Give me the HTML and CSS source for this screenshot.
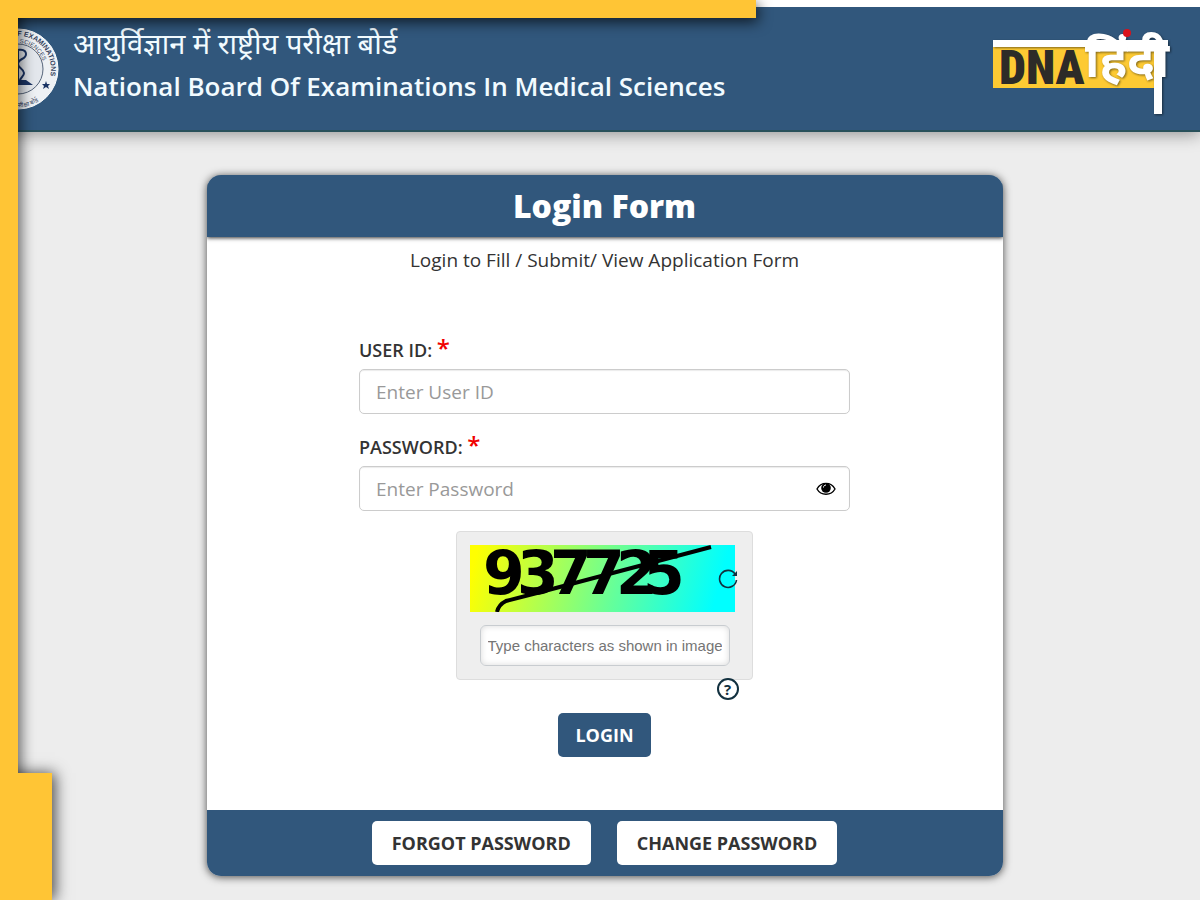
FILE: index.html
```html
<!DOCTYPE html>
<html lang="en">
<head>
  <meta charset="utf-8" />
  <meta name="viewport" content="width=device-width,initial-scale=1" />
  <title>Login Form</title>
  <link rel="stylesheet" href="styles.css">
</head>
<body>
  <div class="frame frame-top"></div>
  <div class="frame frame-left"></div>
  <div class="frame frame-foot"></div>

  <header class="site-header">
    <svg class="emblem" viewBox="0 0 82 82" role="img" aria-label="NBEMS emblem">
      <defs>
        <path id="ringOuter" d="M8 41a33 33 0 1 1 65 8" />
        <path id="ringInner" d="M15 41a26 26 0 0 1 52 0" />
        <path id="ringBottom" d="M3 41a38 38 0 0 0 76 0" />
      </defs>
      <circle cx="41" cy="41" r="40" fill="#eef1f4" stroke="#fff" stroke-width="1" />
      <circle cx="41" cy="41" r="25" fill="#e3e7ec" stroke="#56657a" stroke-width="1" />
      <text class="ring-text"><textPath href="#ringOuter" startOffset="99%" text-anchor="end">OF EXAMINATIONS</textPath></text>
      <text class="ring-text ring-small"><textPath href="#ringInner" startOffset="90%" text-anchor="end">SCIENCES</textPath></text>
      <text class="ring-text ring-small"><textPath href="#ringBottom" startOffset="49%">परीक्षा बोर्ड</textPath></text>
      <path d="M69 53l1 3 3 0-2 2 1 3-3-2-3 2 1-3-2-2 3 0z" fill="#1b3464" />
      <path d="M37 25c2-5 12-4 12 1 0 6-8 4-8 10 0 4 6 5 6 9s-4 4-4 8M41 22v32" fill="none" stroke="#1b3464" stroke-width="2" />
      <path d="M33 52h16l7 5H28z" fill="#1b3464" />
    </svg>
    <div class="org">
      <div class="org-hi" lang="hi">आयुर्विज्ञान में राष्ट्रीय परीक्षा बोर्ड</div>
      <div class="org-en">National Board Of Examinations In Medical Sciences</div>
    </div>
    <svg class="dna-logo" viewBox="0 0 176 94" role="img" aria-label="DNA हिंदी">
      <rect x="0" y="19" width="162" height="48" fill="#fdca33" />
      <text class="dna" x="6" y="63">DNA</text>
      <g class="dna-white">
        <rect x="0" y="19" width="175" height="7" />
        <rect x="161" y="23" width="8" height="70" />
        <text class="dna-hindi" x="92" y="56">हिंदी</text>
      </g>
      <circle cx="134" cy="12" r="4" fill="#d8121b" />
    </svg>
  </header>

  <main class="page">
    <form class="card">
      <h1 class="card-title">Login Form</h1>
      <div class="card-body">
        <p class="lead">Login to Fill / Submit/ View Application Form</p>

        <div class="fields">
          <div class="field">
            <label for="userId">USER ID: <span class="req">*</span></label>
            <input id="userId" type="text" placeholder="Enter User ID">
          </div>
          <div class="field">
            <label for="password">PASSWORD: <span class="req">*</span></label>
            <div class="password-box">
              <input id="password" type="password" placeholder="Enter Password">
              <button class="eye" type="button" aria-label="Show password">
                <svg width="20" height="14" viewBox="0 0 20 14">
                  <path d="M1 7c4-7.500 14-7.500 18 0-4 7-14 7-18 0z" fill="#fff" stroke="#000" stroke-width="1.400" />
                  <circle cx="10" cy="6" r="4.800" />
                  <path d="M7.500 5.500c0-1.500 1-2.500 2.500-2.500" fill="none" stroke="#fff" stroke-width="1" />
                </svg>
              </button>
            </div>
          </div>
        </div>

        <div class="captcha">
          <div class="captcha-image">
            <svg width="265" height="67" viewBox="0 0 265 67" role="img" aria-label="937725">
              <text class="digits" y="49" x="13 47 80 113 146 173">937725</text>
              <path class="scratch" d="M27 67c1-5 3-8 9-11l31-8 174-46" />
            </svg>
            <button class="refresh" type="button" aria-label="Refresh captcha">
              <svg width="20" height="20" viewBox="0 0 20 20">
                <path d="M17 5A8.500 8.500 0 1 0 18.500 11" fill="none" stroke="#12303f" stroke-width="1.600" />
                <path d="M19 2v5h-5z" fill="#12303f" />
              </svg>
            </button>
          </div>
          <input class="captcha-input" type="text" aria-label="Captcha" placeholder="Type characters as shown in image">
        </div>
        <div class="help-row">
          <button class="help" type="button" aria-label="Captcha help">?</button>
        </div>

        <button class="btn btn-login" type="submit">LOGIN</button>
      </div>
      <div class="card-footer">
        <button class="btn btn-light" type="button">FORGOT PASSWORD</button>
        <button class="btn btn-light" type="button">CHANGE PASSWORD</button>
      </div>
    </form>
  </main>
</body>
</html>
```
FILE: styles.css
```css
* { box-sizing: border-box; }
body {
  margin: 0;
  padding-top: 7px;
  position: relative;
  min-height: 100vh;
  overflow-x: hidden;
  background: #ededed;
  color: #333;
  font-family: "Open Sans", "Noto Sans", sans-serif;
  font-size: 18px;
}
button { font-family: inherit; cursor: pointer; }

/* yellow frame over the page */
.frame {
  position: absolute;
  background: #ffc535;
}
.frame-top {
  top: 0; left: 0; z-index: 2;
  width: 63%; height: 18px;
  box-shadow: 2px 4px 14px rgba(0,0,0,0.7);
}
.frame-left {
  top: 0; left: 0; bottom: 0; z-index: 3;
  width: 18px;
  box-shadow: 3px 0 14px rgba(0,0,0,0.6);
  clip-path: inset(18px -30px 0 0);
}
.frame-foot {
  left: 0; bottom: 0; z-index: 4;
  width: 52px; height: 127px;
  box-shadow: 3px 0 14px rgba(0,0,0,0.7);
}
.frame-foot::before {
  content: "";
  position: absolute; left: 0; bottom: 0;
  width: 18px; height: 160px;
  background: #ffc535;
}

/* header */
.site-header {
  display: flex; align-items: flex-start;
  height: 125px;
  padding: 14px 31px 0 0;
  background: #31577c;
  border-bottom: 2px solid #28505a;
  box-shadow: 0 -7px 0 #fff, 0 2px 16px rgba(0,0,0,0.4);
}
.emblem { flex: none; width: 82px; height: 82px; margin: 7px 14px 0 -23px; }
.ring-text { font: bold 7px "Liberation Sans", sans-serif; fill: #33415c; }
.ring-small { font-size: 6px; font-weight: normal; }
.org { flex: 1; white-space: nowrap; color: #f2fbff; }
.org-hi {
  font-family: "Noto Sans", "Noto Sans Devanagari", sans-serif;
  font-size: 29px; line-height: 44px;
}
.org-en {
  font-family: "Open Sans", sans-serif;
  font-size: 26px; line-height: 42px; font-weight: 600;
}
.dna-logo { flex: none; width: 176px; height: 94px; overflow: visible; }
.dna { font: 900 48px "Roboto Condensed", Roboto, sans-serif; fill: #2d2b28; }
.dna-white { fill: #fff; filter: drop-shadow(1px 1px 1px rgba(0,0,0,0.5)); }
.dna-hindi { font: bold 49px "Noto Sans", "Noto Sans Devanagari", sans-serif; }

/* login card */
.page { padding: 43px 0 24px 9px; }
.card {
  width: 67%; max-width: 796px;
  margin: 0 auto;
  overflow: hidden;
  background: #fff;
  border-radius: 14px;
  box-shadow: 0 1px 9px rgba(0,0,0,0.7);
}
.card-title {
  position: relative;
  margin: 0;
  background: #31577c; color: #fff;
  font-size: 32px; line-height: 62px; font-weight: 800;
  text-align: center;
  box-shadow: 0 1px 4px rgba(0,0,0,0.8);
}
.card-body {
  display: flex; flex-direction: column; align-items: center;
  padding: 8px 16px 53px;
}
.lead { margin: 0 0 62px; font-size: 19px; line-height: 30px; }
.fields { width: 100%; max-width: 491px; }
.field { margin-bottom: 20px; }
.field label {
  display: block;
  height: 32px;
  font-size: 18px; line-height: 26px; font-weight: 600;
}
.req { color: #f00000; font-size: 24px; line-height: 20px; font-weight: 600; }
.field input {
  width: 100%; height: 45px;
  padding: 0 16px;
  border: 1px solid #ccc; border-radius: 5px;
  background: #fff;
  font-family: inherit; font-size: 19px; color: #333;
  box-shadow: inset 0 1px 1px rgba(0,0,0,0.08);
}
.field input::placeholder { color: #999; opacity: 1; }
.password-box { position: relative; }
.eye {
  position: absolute; right: 14px; top: 0;
  height: 45px; padding: 0;
  display: flex; align-items: center;
  border: none; background: none;
}

/* captcha */
.captcha {
  display: flex; flex-direction: column; align-items: center; gap: 13px;
  padding: 13px;
  border: 1px solid #ddd; border-radius: 4px;
  background: #eee;
}
.captcha-image {
  position: relative;
  width: 269px; height: 67px;
  border-right: 4px solid #eee;
  background: linear-gradient(105deg, #ff0 3%, #6f9 55%, #0ff 92%) padding-box;
}
.digits { font: bold 60px "DejaVu Sans", sans-serif; fill: #000; }
.scratch { fill: none; stroke: #000; stroke-width: 4; }
.refresh {
  position: absolute; right: -3px; top: 24px;
  padding: 0; border: none; background: none;
  line-height: 0;
}
.captcha-input {
  width: 250px; height: 41px;
  padding: 0 7px;
  border: 1px solid #c8ccd0; border-radius: 6px;
  background: #fff;
  font-family: "Liberation Sans", sans-serif; font-size: 15px;
  box-shadow: inset 0 0 6px rgba(0,0,0,0.15);
}
.captcha-input::placeholder { color: #757575; opacity: 1; }
.help-row {
  display: flex; justify-content: flex-end;
  width: 268px; height: 33px;
}
.help {
  width: 22px; height: 22px;
  margin-top: -2px; padding: 0;
  border: 2px solid #12303f; border-radius: 50%;
  background: #fff; color: #12303f;
  font-size: 15px; line-height: 18px; font-weight: 700;
}

/* buttons */
.btn {
  height: 44px; padding: 0 17px;
  border: none; border-radius: 5px;
  font-size: 18px; font-weight: 700;
}
.btn-login { background: #31577c; color: #fff; }
.btn-light { padding: 0 20px; background: #fff; color: #333; }
.card-footer {
  display: flex; flex-wrap: wrap; justify-content: center; gap: 10px 26px;
  padding: 11px;
  background: #31577c;
}
```
